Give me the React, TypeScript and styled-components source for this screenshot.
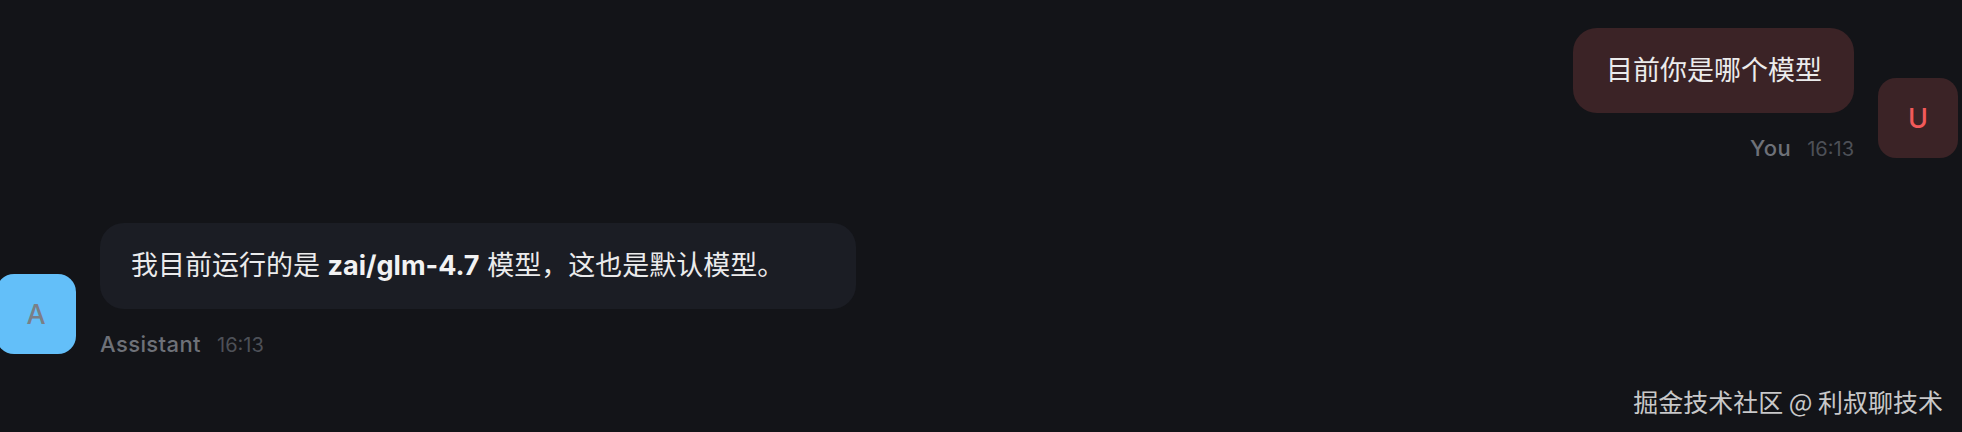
import React from "react";
import styled, { createGlobalStyle } from "styled-components";

const GlobalStyle = createGlobalStyle`
  html, body {
    margin: 0;
    padding: 0;
    background: #131418;
    overflow: hidden;
  }
  body {
    font-family: "Inter", "Noto Sans CJK SC", sans-serif;
    color: #e9e9ea;
  }
`;

const Page = styled.div`
  position: relative;
  width: 100%;
  height: 432px;
  background: #131418;
  overflow: hidden;
`;

// the view is scrolled a few px to the left, so the left avatar is cut
const MessageList = styled.div`
  display: flex;
  flex-direction: column;
  gap: 61px;
  padding-top: 28px;
  margin: 0 4px 0 -4px;
`;

const Row = styled.div<{ $mine?: boolean }>`
  display: flex;
  flex-direction: ${(p) => (p.$mine ? "row-reverse" : "row")};
  align-items: flex-end;
  gap: 24px;
`;

const Avatar = styled.div<{ $mine?: boolean }>`
  flex: none;
  width: 80px;
  height: 80px;
  margin-bottom: 4px;
  border-radius: 18px;
  display: flex;
  align-items: center;
  justify-content: center;
  font-size: 27px;
  font-weight: 500;
  background: ${(p) => (p.$mine ? "#3b2326" : "#63bff9")};
  color: ${(p) => (p.$mine ? "#f25a5a" : "#7a7f87")};
`;

const Column = styled.div<{ $mine?: boolean }>`
  display: flex;
  flex-direction: column;
  align-items: ${(p) => (p.$mine ? "flex-end" : "flex-start")};
`;

const Bubble = styled.div<{ $mine?: boolean }>`
  box-sizing: border-box;
  padding: ${(p) => (p.$mine ? "21px 32px 21px 33px" : "21px 72px 22px 31px")};
  border-radius: 24px;
  font-size: 27px;
  line-height: 43px;
  white-space: nowrap;
  background: ${(p) => (p.$mine ? "#3b2326" : "#1b1d24")};
  color: #ebebec;

  strong {
    font-weight: 700;
    color: #f2f2f3;
  }
`;

const Meta = styled.div`
  display: flex;
  align-items: baseline;
  gap: 16px;
  margin-top: 23px;
  font-size: 22px;
  line-height: 25px;
`;

const Name = styled.span`
  font-weight: 500;
  letter-spacing: 0.4px;
  color: #6e7178;
`;

const Time = styled.span`
  font-size: 20px;
  color: #4d5057;
`;

const Watermark = styled.div`
  position: absolute;
  right: 19px;
  bottom: 18px;
  font-family: "Noto Sans CJK SC", sans-serif;
  font-size: 25px;
  line-height: 1;
  color: rgba(235, 235, 235, 0.85);
`;

export default function App() {
  return (
    <Page>
      <GlobalStyle />
      <MessageList>
        <Row $mine>
          <Avatar $mine>U</Avatar>
          <Column $mine>
            <Bubble $mine>目前你是哪个模型</Bubble>
            <Meta>
              <Name>You</Name>
              <Time>16:13</Time>
            </Meta>
          </Column>
        </Row>
        <Row>
          <Avatar>A</Avatar>
          <Column>
            <Bubble>
              我目前运行的是 <strong>zai/glm-4.7</strong> 模型，这也是默认模型。
            </Bubble>
            <Meta>
              <Name>Assistant</Name>
              <Time>16:13</Time>
            </Meta>
          </Column>
        </Row>
      </MessageList>
      <Watermark>掘金技术社区 @ 利叔聊技术</Watermark>
    </Page>
  );
}
